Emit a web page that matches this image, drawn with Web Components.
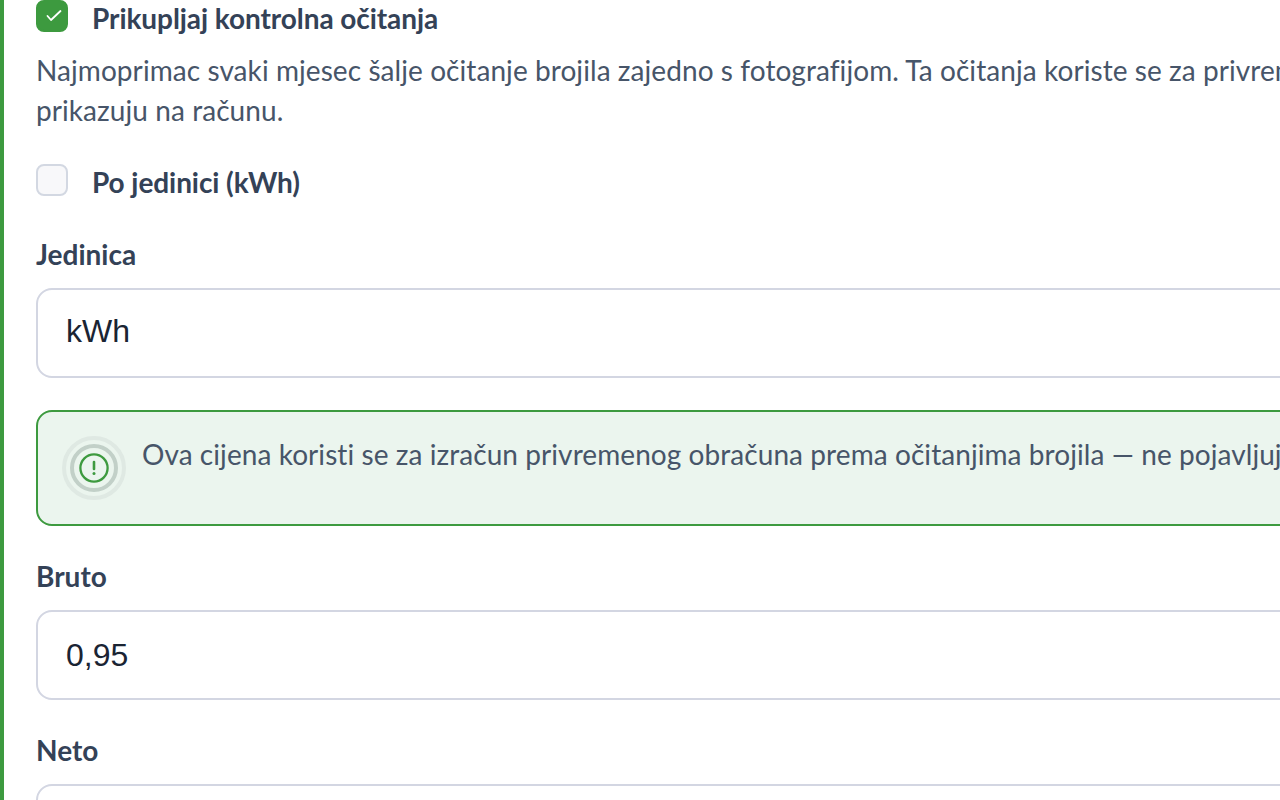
<!DOCTYPE html>
<html lang="hr">
<head>
<meta charset="utf-8">
<title>Postavke brojila</title>
<style>
  html, body { margin: 0; height: 800px; overflow: hidden; background: #fff; }
  body { font-family: "Lato", sans-serif; }
</style>
</head>
<body>
<meter-settings>
  <check-row checked>Prikupljaj kontrolna očitanja</check-row>
  <help-text>Najmoprimac svaki mjesec šalje očitanje brojila zajedno s fotografijom. Ta očitanja koriste se za privremeni obračun i ne<br>prikazuju na računu.</help-text>
  <check-row style="margin-top:34px">Po jedinici (kWh)</check-row>
  <text-field label="Jedinica" value="kWh" lift="4" style="margin-top:36px"></text-field>
  <info-notice style="margin-top:32px">Ova cijena koristi se za izračun privremenog obračuna prema očitanjima brojila — ne pojavljuje se na računu.</info-notice>
  <text-field label="Bruto" value="0,95" style="margin-top:32px"></text-field>
  <text-field label="Neto" value="" style="margin-top:32px"></text-field>
</meter-settings>

<script>
class MeterSettings extends HTMLElement {
  constructor() {
    super();
    this.attachShadow({ mode: 'open' });
    this.shadowRoot.innerHTML = `
      <style>
        :host { display: block; width: 1900px; box-sizing: border-box; padding: 0 0 0 32px; border-left: 4px solid #3d9a3f; min-height: 1000px; }
      </style>
      <slot></slot>`;
  }
}

class CheckRow extends HTMLElement {
  constructor() {
    super();
    this.attachShadow({ mode: 'open' });
    const on = this.hasAttribute('checked');
    this.shadowRoot.innerHTML = `
      <style>
        :host { display: flex; align-items: flex-start; gap: 24px; }
        .box { width: 32px; height: 32px; box-sizing: border-box; border-radius: 8px; flex: none;
               display: flex; align-items: center; justify-content: center;
               background: ${on ? '#3d9a3f' : '#f8f8fa'}; border: 2px solid ${on ? '#3d9a3f' : '#d3d8e2'}; }
        .text { font-size: 28px; line-height: 36px; font-weight: 700; letter-spacing: -0.07px; color: #344257; }
      </style>
      <span class="box">${on ? `<svg width="20" height="20" viewBox="0 0 20 20" fill="none" stroke="#fff" stroke-width="1.8" stroke-linecap="round" stroke-linejoin="round"><path d="M5.5 10L9 14l9.5-9"/></svg>` : ''}</span>
      <span class="text"><slot></slot></span>`;
  }
}

class HelpText extends HTMLElement {
  constructor() {
    super();
    this.attachShadow({ mode: 'open' });
    this.shadowRoot.innerHTML = `
      <style>
        :host { display: block; margin-top: 14px; font-size: 28px; line-height: 40px; letter-spacing: 0.07px; color: #475569; }
      </style>
      <slot></slot>`;
  }
}

class TextField extends HTMLElement {
  constructor() {
    super();
    this.attachShadow({ mode: 'open' });
    const lift = this.getAttribute('lift') || '0';
    this.shadowRoot.innerHTML = `
      <style>
        :host { display: block; }
        label { display: block; font-size: 28px; line-height: 36px; font-weight: 700; color: #344257; margin-bottom: 16px; }
        .input { height: 90px; box-sizing: border-box; border: 2px solid #d3d6e2; border-radius: 16px; background: #fff;
                 padding: 0 28px ${lift}px; display: flex; align-items: center;
                 font: 32px "Liberation Sans", Arial, sans-serif; color: #1a2433; }
      </style>
      <label>${this.getAttribute('label')}</label>
      <div class="input">${this.getAttribute('value')}</div>`;
  }
}

class InfoNotice extends HTMLElement {
  constructor() {
    super();
    this.attachShadow({ mode: 'open' });
    this.shadowRoot.innerHTML = `
      <style>
        :host { display: flex; gap: 16px; box-sizing: border-box; min-height: 116px; padding: 24px; background: #ebf5ee;
                border: 2px solid #3d9a3f; border-radius: 16px; }
        svg { flex: none; }
        .text { font-size: 28px; line-height: 40px; letter-spacing: 0.07px; color: #475569; margin-top: -2px; }
      </style>
      <svg width="64" height="64" viewBox="0 0 64 64" fill="none">
        <circle cx="32" cy="32" r="30" stroke="#dfe9e3" stroke-width="4"/>
        <circle cx="32" cy="32" r="22" stroke="#c2d0c8" stroke-width="4"/>
        <circle cx="32" cy="32" r="13.6" stroke="#3d9a3f" stroke-width="2.3"/>
        <path d="M32 26v7" stroke="#3d9a3f" stroke-width="2.6" stroke-linecap="round"/>
        <circle cx="32" cy="37.6" r="1.5" fill="#3d9a3f"/>
      </svg>
      <span class="text"><slot></slot></span>`;
  }
}

customElements.define('meter-settings', MeterSettings);
customElements.define('check-row', CheckRow);
customElements.define('help-text', HelpText);
customElements.define('text-field', TextField);
customElements.define('info-notice', InfoNotice);
</script>
</body>
</html>
